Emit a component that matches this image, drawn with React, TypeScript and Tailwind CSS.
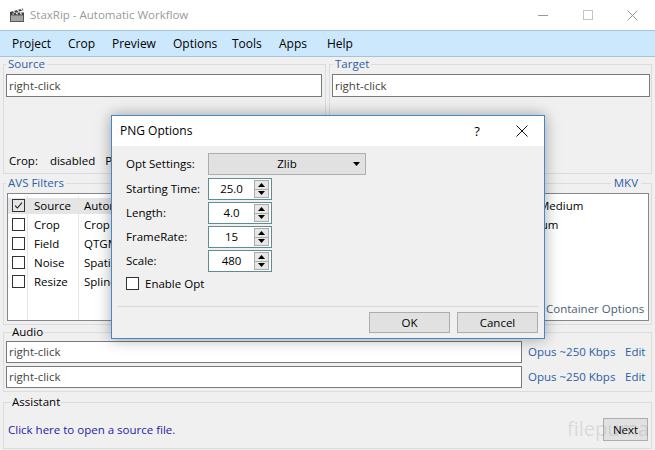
import React from 'react';

type Kids = { children?: React.ReactNode };

function Check({ checked, white }: { checked?: boolean; white?: boolean }) {
  return (
    <span className={`w-[13px] h-[13px] border border-[#333333] flex items-center justify-center shrink-0 ${white ? 'bg-white' : ''}`}>
      {checked && (
        <svg width="9" height="9" viewBox="0 0 9 9">
          <path d="M1 4.6 L3.4 7 L8 1.6" fill="none" stroke="#222" strokeWidth="1.1" />
        </svg>
      )}
    </span>
  );
}

function TextBox({ w, text }: { w: string; text: string }) {
  return (
    <div className={`${w} h-[23px] border border-[#7a7a7a] bg-white flex items-center pl-[2px] text-[#444444]`}>{text}</div>
  );
}

function SpinBox({ value }: { value: string }) {
  return (
    <div className="w-[64px] h-[22px] border border-[#5f8e92] bg-white flex items-center">
      <div className="flex-1 text-center">{value}</div>
      <div className="w-[15px] h-[18px] mr-[2px] flex flex-col border border-[#acacac] bg-[#e6e6e6]">
        <div className="flex-1 flex items-center justify-center border-b border-[#acacac]">
          <svg width="7" height="4" viewBox="0 0 7 4"><path d="M0 4 L3.5 0 L7 4Z" fill="#000" /></svg>
        </div>
        <div className="flex-1 flex items-center justify-center">
          <svg width="7" height="4" viewBox="0 0 7 4"><path d="M0 0 L3.5 4 L7 0Z" fill="#000" /></svg>
        </div>
      </div>
    </div>
  );
}

function WinButton({ w, children }: { w: string } & Kids) {
  return (
    <div className={`${w} h-[21px] border border-[#adadad] bg-[#e1e1e1] flex items-center justify-center`}>{children}</div>
  );
}

const filters = [
  { on: true, name: 'Source', desc: 'AutomaticSourceFilter' },
  { on: false, name: 'Crop', desc: 'Crop' },
  { on: false, name: 'Field', desc: 'QTGMC Medium' },
  { on: false, name: 'Noise', desc: 'SpatialDenoise' },
  { on: false, name: 'Resize', desc: 'Spline64Resize' },
];

const menu = [
  { t: 'Project', w: 'w-[56px]' },
  { t: 'Crop', w: 'w-[44px]' },
  { t: 'Preview', w: 'w-[61px]' },
  { t: 'Options', w: 'w-[59px]' },
  { t: 'Tools', w: 'w-[47px]' },
  { t: 'Apps', w: 'w-[48px]' },
  { t: 'Help', w: 'w-[40px]' },
];

function TitleBar() {
  return (
    <div className="h-[30px] bg-white flex items-center">
      <svg className="ml-[9px]" width="16" height="16" viewBox="0 0 16 16">
        <rect x="1" y="7" width="14" height="8" fill="#555" />
        <rect x="2" y="8.5" width="12" height="5.5" fill="#a5a5a5" />
        <rect x="1" y="5.5" width="14" height="2" fill="#3a3a3a" />
        <path d="M2.5 5.5 L4 5.5 L5.2 7.5 L3.7 7.5Z" fill="#eee" />
        <path d="M6.5 5.5 L8 5.5 L9.2 7.5 L7.7 7.5Z" fill="#eee" />
        <path d="M10.5 5.5 L12 5.5 L13.2 7.5 L11.7 7.5Z" fill="#eee" />
        <path d="M1 5 L13.8 1.4 L14.4 3.3 L1.6 6.9Z" fill="#3a3a3a" />
        <path d="M3.6 4.3 L5 3.9 L6.6 5.6 L5.2 6Z" fill="#eee" />
        <path d="M7.6 3.1 L9 2.7 L10.6 4.4 L9.2 4.8Z" fill="#eee" />
        <path d="M11.4 2.1 L12.8 1.7 L14 3.3 L12.8 3.6Z" fill="#eee" />
      </svg>
      <span className="ml-[5px] text-[#999999]">StaxRip - Automatic Workflow</span>
      <div className="ml-auto flex h-full">
        <div className="w-[45px] flex items-center justify-center">
          <svg width="10" height="10" viewBox="0 0 10 10"><path d="M0 5.5 H10" stroke="#9a9a9a" strokeWidth="1" /></svg>
        </div>
        <div className="w-[45px] flex items-center justify-center">
          <svg width="10" height="10" viewBox="0 0 10 10"><rect x="0.5" y="0.5" width="9" height="9" fill="none" stroke="#c4c4c4" /></svg>
        </div>
        <div className="w-[45px] flex items-center justify-center">
          <svg width="11" height="11" viewBox="0 0 11 11"><path d="M0.5 0.5 L10.5 10.5 M10.5 0.5 L0.5 10.5" stroke="#9a9a9a" strokeWidth="1" /></svg>
        </div>
      </div>
    </div>
  );
}

function MenuBar() {
  return (
    <div className="h-[27px] bg-[#cce8fc] border-y border-[#a9c1d6] flex items-center pl-[12px] text-[12px]">
      {menu.map(m => (
        <span key={m.t} className={m.w}>{m.t}</span>
      ))}
    </div>
  );
}

function Dialog() {
  return (
    <div className="absolute left-[111px] top-[115px] w-[434px] h-[224px] border border-[#4389c8] bg-[#f0f0f0] shadow-[0_0_14px_rgba(0,0,0,0.35)] flex flex-col">
      <div className="h-[30px] bg-white flex items-center pl-[8px] shrink-0 text-[12px]">
        <span>PNG Options</span>
        <span className="ml-auto w-[30px] mr-[7px] text-center text-[13px]">?</span>
        <div className="w-[45px] flex items-center justify-center">
          <svg width="12" height="12" viewBox="0 0 12 12"><path d="M0.5 0.5 L11.5 11.5 M11.5 0.5 L0.5 11.5" stroke="#111" strokeWidth="1" /></svg>
        </div>
      </div>
      <div className="pl-[14px] pt-[7px] flex flex-col">
        <div className="flex items-center h-[22px]">
          <span className="w-[82px]">Opt Settings:</span>
          <div className="relative w-[158px] h-[22px] border border-[#adadad] bg-[#e1e1e1] flex items-center justify-center">
            Zlib
            <svg className="absolute right-[5px] top-[8px]" width="7" height="4" viewBox="0 0 7 4"><path d="M0 0 L3.5 4 L7 0Z" fill="#000" /></svg>
          </div>
        </div>
        {[
          ['Starting Time:', '25.0', 'mt-[3px]'],
          ['Length:', '4.0', 'mt-[2px]'],
          ['FrameRate:', '15', 'mt-[2px]'],
          ['Scale:', '480', 'mt-[2px]'],
        ].map(([label, value, mt]) => (
          <div key={label} className={`flex items-center h-[22px] ${mt}`}>
            <span className="w-[82px]">{label}</span>
            <SpinBox value={value} />
          </div>
        ))}
        <div className="flex items-center mt-[5px] h-[13px]">
          <Check white />
          <span className="ml-[6px]">Enable Opt</span>
        </div>
      </div>
      <div className="mx-[6px] mt-[16px] h-px bg-[#d6d6d6]" />
      <div className="flex justify-end gap-[7px] pr-[6px] mt-[5px]">
        <WinButton w="w-[81px]">OK</WinButton>
        <WinButton w="w-[81px]">Cancel</WinButton>
      </div>
    </div>
  );
}

export default function App() {
  return (
    <div className="relative w-[655px] h-[450px] overflow-hidden bg-[#f0f0f0] text-[11.5px] leading-[16px] text-black font-['Open_Sans','Noto_Sans',sans-serif]">
      <TitleBar />
      <MenuBar />
      <div className="px-[3px]">
        <div className="grid grid-cols-[323px_323px] gap-[3px]">
          <fieldset className="h-[117px] border border-[#dcdcdc] min-w-0">
            <legend className="ml-[2px] px-[2px] leading-[14px] text-[#2b5ea7]">Source</legend>
            <div className="h-[102px] flex flex-col px-[2px]">
              <div className="mt-[3px]"><TextBox w="w-[316px]" text="right-click" /></div>
              <div className="mt-auto mb-[5px] pl-[3px] flex leading-[14px]">
                <span>Crop:</span>
                <span className="ml-[12px]">disabled</span>
                <span className="ml-[10px]">PAR</span>
              </div>
            </div>
          </fieldset>
          <fieldset className="h-[117px] border border-[#dcdcdc] min-w-0">
            <legend className="ml-[3px] px-[2px] leading-[14px] text-[#2b5ea7]">Target</legend>
            <div className="h-[102px] flex flex-col px-[2px]">
              <div className="mt-[3px]"><TextBox w="w-[318px]" text="right-click" /></div>
            </div>
          </fieldset>
        </div>

        <div className="grid grid-cols-[323px_323px] gap-[3px] mt-[2px]">
          <fieldset className="h-[149px] border border-[#dcdcdc] min-w-0">
            <legend className="ml-[2px] px-[2px] leading-[14px] text-[#2b5ea7]">AVS Filters</legend>
            <div className="mt-[3px] ml-[3px] mr-[3px] h-[128px] border border-[#828790] bg-white flex pt-[2px]">
              <div className="w-[20px] border-r border-[#e5e5e5] flex flex-col">
                {filters.map((f, i) => (
                  <div key={f.name} className="h-[19px] flex items-center">
                    <div className={`w-full h-[16px] flex items-center pl-[4px] ${i === 0 ? 'bg-[#e5e5e5]' : ''}`}>
                      <Check checked={f.on} />
                    </div>
                  </div>
                ))}
              </div>
              <div className="w-[51px] border-r border-[#e5e5e5] flex flex-col">
                {filters.map((f, i) => (
                  <div key={f.name} className="h-[19px] flex items-center">
                    <div className={`w-full h-[16px] flex items-center pl-[6px] ${i === 0 ? 'bg-[#e5e5e5]' : ''}`}>{f.name}</div>
                  </div>
                ))}
              </div>
              <div className="flex-1 flex flex-col">
                {filters.map((f, i) => (
                  <div key={f.name} className="h-[19px] flex items-center">
                    <div className={`w-full h-[16px] flex items-center pl-[5px] ${i === 0 ? 'bg-[#e5e5e5]' : ''}`}>{f.desc}</div>
                  </div>
                ))}
              </div>
            </div>
          </fieldset>
          <fieldset className="h-[149px] border border-[#dcdcdc] min-w-0">
            <legend className="ml-auto mr-[10px] px-[3px] leading-[14px] text-[#2b5ea7]">MKV</legend>
            <div className="mt-[3px] ml-[3px] mr-[2px] h-[128px] border border-[#828790] bg-white flex flex-col pt-[2px]">
              <div className="h-[19px] flex items-center whitespace-nowrap">
                <span className="w-[205px] pl-[4px]">x265</span>
                <span>Medium</span>
              </div>
              <div className="h-[19px] flex items-center whitespace-nowrap">
                <span className="w-[175px] pl-[4px]">Quality 20</span>
                <span>Premium</span>
              </div>
              <div className="mt-auto mb-[3px] pl-[212px] whitespace-nowrap text-[#4a6078]">Container Options</div>
            </div>
          </fieldset>
        </div>

        <fieldset className="h-[67px] border border-[#dcdcdc] min-w-0">
          <legend className="ml-[8px] leading-[14px]">Audio</legend>
          <div className="px-[2px]">
            {['mt-[2px]', 'mt-[3px]'].map(mt => (
              <div key={mt} className={`flex items-center ${mt}`}>
                <div className="w-[516px] h-[22px] border border-[#7a7a7a] bg-white flex items-center pl-[2px] text-[#444444]">right-click</div>
                <span className="ml-[6px] w-[97px] whitespace-nowrap text-[#2b5ea7]">Opus ~250 Kbps</span>
                <span className="text-[#2b5ea7]">Edit</span>
              </div>
            ))}
          </div>
        </fieldset>

        <fieldset className="h-[54px] mt-[3px] border border-[#dcdcdc] min-w-0">
          <legend className="ml-[8px] leading-[14px]">Assistant</legend>
          <div className="h-[39px] flex items-center pl-[4px] pr-[3px] pt-[2px]">
            <span className="text-[#2323a8]">Click here to open a source file.</span>
            <div className="ml-auto w-[45px] h-[23px] border border-[#adadad] bg-[#e1e1e1] flex items-center justify-center">Next</div>
          </div>
        </fieldset>
      </div>

      <Dialog />

      <div className="absolute left-[567px] top-[417px] text-[20px] leading-[24px] text-[rgba(120,120,120,0.2)] pointer-events-none">filepuma</div>
    </div>
  );
}
